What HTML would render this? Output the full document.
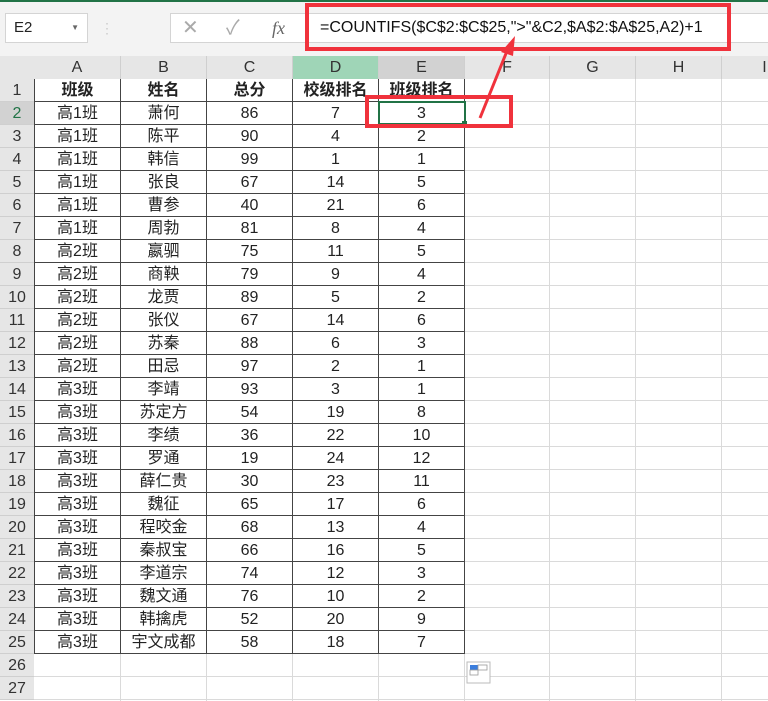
<!DOCTYPE html>
<html><head><meta charset="utf-8"><style>
body{margin:0;width:768px;height:701px;overflow:hidden;background:#fff;font-family:"Liberation Sans","Noto Sans CJK SC",sans-serif;position:relative}
.top{position:absolute;left:0;top:0;width:768px;height:56px;background:#f3f3f3}
.topline{position:absolute;left:0;top:0;width:768px;height:2px;background:#217346}
.nb{position:absolute;left:5px;top:13px;width:83px;height:30px;background:#fff;border:1px solid #d4d4d4;box-sizing:border-box;font-size:15px;line-height:28px;padding-left:8px;color:#222}
.nb span{position:absolute;right:8px;top:0;font-size:8px;color:#666}
.fb{position:absolute;left:170px;top:13px;width:600px;height:30px;background:#fff;border:1px solid #d4d4d4;box-sizing:border-box}
.ic{position:absolute;top:13px;font-size:20px;color:#aaa;line-height:30px}
.formula{position:absolute;left:320px;top:13px;font-size:16px;line-height:30px;color:#111}
.red{position:absolute;border:4px solid #f0323c;box-sizing:border-box}
.c{position:absolute;box-sizing:border-box;text-align:center;font-size:16px;line-height:23px;color:#222;height:23px}
.h{background:#e6e6e6;color:#333;font-size:16px}
.g{position:absolute;background:#dadada}
</style></head><body>
<div class="top"></div><div class="topline"></div>
<div class="nb">E2<span>▼</span></div>
<div class="ic" style="left:100px;color:#ccc;font-size:14px">⋮</div>
<div class="fb"></div>
<div class="ic" style="left:182px">✕</div>
<div class="ic" style="left:226px">✓</div>
<div class="ic" style="left:272px;font-family:'Liberation Serif',serif;font-style:italic;color:#666;font-size:18px">fx</div>
<div class="formula">=COUNTIFS($C$2:$C$25,"&gt;"&amp;C2,$A$2:$A$25,A2)+1</div>
<div id="grid"></div>
<svg style="position:absolute;left:0;top:0" width="768" height="701">
<line x1="480" y1="118" x2="509" y2="46" stroke="#f0323c" stroke-width="3"/>
<polygon points="515,36 501,52 513,56" fill="#f0323c"/>
<rect x="467" y="662" width="23" height="21" fill="#fff" stroke="#bbb"/>
<rect x="470" y="665" width="8" height="5" fill="#3b7ddd"/>
<rect x="478" y="665" width="9" height="5" fill="none" stroke="#999" stroke-width=".8"/>
<rect x="470" y="670" width="8" height="5" fill="none" stroke="#999" stroke-width=".8"/>
</svg>
<div class="red" style="left:305px;top:3px;width:426px;height:48px"></div>
<div class="red" style="left:365px;top:95px;width:148px;height:33px"></div>
<script>
var X=[0,34,121,207,293,379,465,550,636,722,808],L="ABCDEFGHI";
var d=[["班级","姓名","总分","校级排名","班级排名"],
["高1班","萧何",86,7,3],["高1班","陈平",90,4,2],["高1班","韩信",99,1,1],["高1班","张良",67,14,5],["高1班","曹参",40,21,6],["高1班","周勃",81,8,4],
["高2班","嬴驷",75,11,5],["高2班","商鞅",79,9,4],["高2班","龙贾",89,5,2],["高2班","张仪",67,14,6],["高2班","苏秦",88,6,3],["高2班","田忌",97,2,1],
["高3班","李靖",93,3,1],["高3班","苏定方",54,19,8],["高3班","李绩",36,22,10],["高3班","罗通",19,24,12],["高3班","薛仁贵",30,23,11],["高3班","魏征",65,17,6],["高3班","程咬金",68,13,4],["高3班","秦叔宝",66,16,5],["高3班","李道宗",74,12,3],["高3班","魏文通",76,10,2],["高3班","韩擒虎",52,20,9],["高3班","宇文成都",58,18,7]];
var h="",T=79,R=23;
h+='<div class="c h" style="left:0;top:56px;width:34px;height:23px"></div>';
for(var i=0;i<9;i++){var bg=i==3?"#9fd5b7":i==4?"#d2d2d2":"#e6e6e6";
h+='<div class="c h" style="left:'+X[i+1]+'px;top:56px;width:'+(X[i+2]-X[i+1])+'px;background:'+bg+';border-right:1px solid #cfcfcf">'+L[i]+'</div>';}
for(var r=0;r<27;r++){var y=T+r*R;
h+='<div class="c h" style="left:0;top:'+y+'px;width:34px;border-bottom:1px solid #cfcfcf;'+(r==1?'color:#217346;background:#d2d2d2':'')+'">'+(r+1)+'</div>';
h+='<div class="g" style="left:34px;top:'+(y+R-1)+'px;width:734px;height:1px"></div>';}
for(var i=2;i<10;i++)h+='<div class="g" style="left:'+(X[i]-1)+'px;top:79px;width:1px;height:622px"></div>';
for(var r=0;r<25;r++)for(var c=0;c<5;c++){
h+='<div class="c" style="left:'+X[c+1]+'px;top:'+(T+r*R)+'px;width:'+(X[c+2]-X[c+1])+'px;border-right:1px solid #444;border-bottom:1px solid #444;'+(r==0?'font-weight:bold;':'')+(c==0?'border-left:1px solid #444;':'')+'">'+d[r][c]+'</div>';}
h+='<div style="position:absolute;left:378px;top:101px;width:88px;height:24px;border:2px solid #217346;box-sizing:border-box"></div><div style="position:absolute;left:462px;top:121px;width:5px;height:5px;background:#217346"></div>';
document.getElementById("grid").innerHTML=h;
</script>
</body></html>
